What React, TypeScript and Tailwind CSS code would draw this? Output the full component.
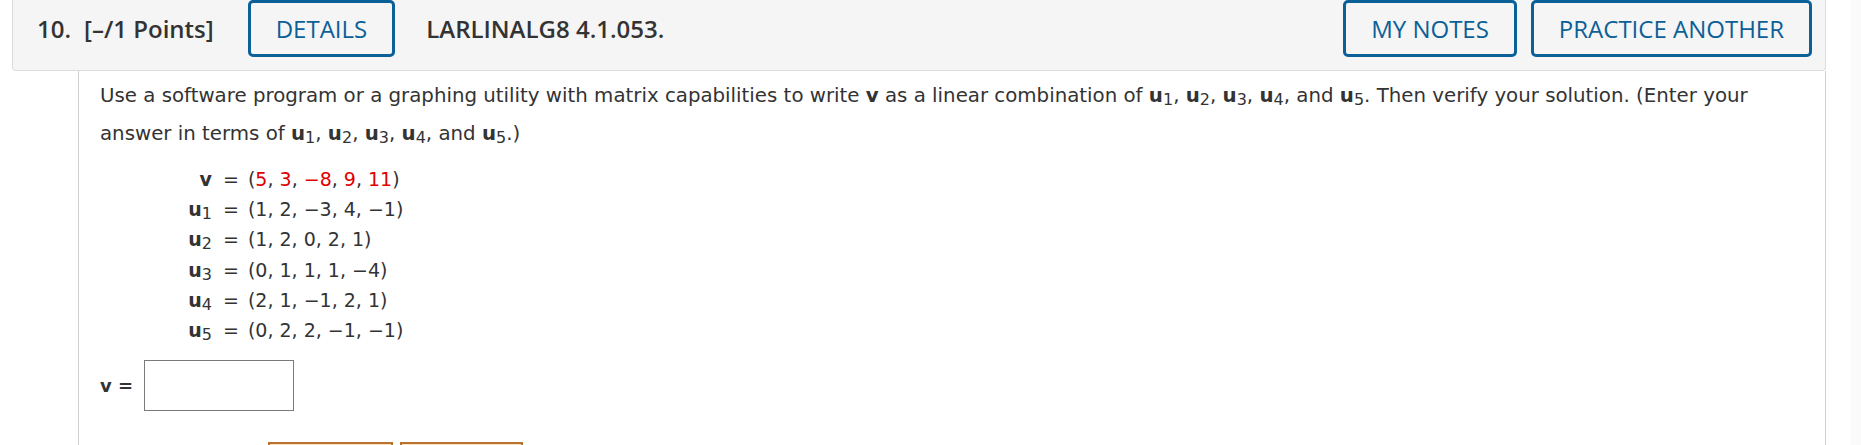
import type { ReactNode } from 'react'

const headerFont = { fontFamily: '"Open Sans", "Liberation Sans", sans-serif' }
const bodyFont = { fontFamily: '"DejaVu Sans", Verdana, sans-serif' }

function HeaderButton({ children }: { children: ReactNode }) {
  return (
    <button className="h-[57px] rounded-[5px] border-[3px] border-[#0b6097] bg-[#f5f5f5] px-[25px] text-[24px] leading-none text-[#0b6097]">
      {children}
    </button>
  )
}

function U({ n }: { n: number }) {
  return (
    <span className="whitespace-nowrap">
      <b>u</b>
      <sub className="relative -bottom-[3px] text-[16px] align-baseline">{n}</sub>
    </span>
  )
}

const rows: { label: ReactNode; value: ReactNode }[] = [
  {
    label: <b>v</b>,
    value: (
      <>
        (<span className="text-[#e00000]">5</span>, <span className="text-[#e00000]">3</span>,{' '}
        <span className="text-[#e00000]">−8</span>, <span className="text-[#e00000]">9</span>,{' '}
        <span className="text-[#e00000]">11</span>)
      </>
    ),
  },
  { label: <U n={1} />, value: '(1, 2, −3, 4, −1)' },
  { label: <U n={2} />, value: '(1, 2, 0, 2, 1)' },
  { label: <U n={3} />, value: '(0, 1, 1, 1, −4)' },
  { label: <U n={4} />, value: '(2, 1, −1, 2, 1)' },
  { label: <U n={5} />, value: '(0, 2, 2, −1, −1)' },
]

export default function App() {
  return (
    <div className="flex h-[445px] w-[1861px] overflow-hidden bg-white text-[#333]">
      <div className="flex w-[1851px] flex-col pl-[12px] pr-[25px]">
        {/* question header */}
        <div
          className="flex h-[71px] shrink-0 items-start rounded-b-[4px] border border-t-0 border-[#dcdcdc] bg-[#f5f5f5] pr-[13px]"
          style={headerFont}
        >
          <div className="flex h-[57px] flex-1 items-center">
            <span className="ml-[24px] text-[24px] font-semibold">10.</span>
            <span className="ml-[13px] text-[24px] font-semibold">[–/1 Points]</span>
            <div className="ml-[34px]">
              <HeaderButton>DETAILS</HeaderButton>
            </div>
            <span className="ml-[31px] text-[24px] font-semibold">LARLINALG8 4.1.053.</span>
          </div>
          <div className="flex gap-[14px]">
            <HeaderButton>MY NOTES</HeaderButton>
            <HeaderButton>PRACTICE ANOTHER</HeaderButton>
          </div>
        </div>

        {/* question body */}
        <div
          className="ml-[66px] flex-1 border-x border-[#d0d0d0] pl-[21px] pr-[60px] pt-[6px] text-[19.8px]"
          style={bodyFont}
        >
          <p className="leading-[38px]">
            Use a software program or a graphing utility with matrix capabilities to write <b>v</b> as a
            linear combination of <U n={1} />, <U n={2} />, <U n={3} />, <U n={4} />, and <U n={5} />. Then
            verify your solution. (Enter your answer in terms of <U n={1} />, <U n={2} />, <U n={3} />,{' '}
            <U n={4} />, and <U n={5} />
            .)
          </p>

          <div className="mt-[11px] grid grid-cols-[112px_auto_1fr] text-[19px] leading-[30.2px]">
            {rows.map((r, i) => (
              <div key={i} className="contents">
                <div className="text-right">{r.label}</div>
                <div className="pl-[11px] pr-[9px]">=</div>
                <div>{r.value}</div>
              </div>
            ))}
          </div>

          <div className="mt-[15px] flex items-center">
            <span className="text-[18px] font-bold">v =</span>
            <input
              type="text"
              className="ml-[11px] h-[51px] w-[150px] border border-[#7a7a7a] bg-white outline-none"
            />
          </div>

          <div className="ml-[168px] mt-[31px] flex gap-[7px]">
            <div className="h-[30px] w-[125px] border-2 border-[#b8722f] bg-gradient-to-b from-[#fde3c0] to-[#f6c88f]" />
            <div className="h-[30px] w-[123px] border-2 border-[#b8722f] bg-gradient-to-b from-[#fde3c0] to-[#f6c88f]" />
          </div>
        </div>
      </div>
      <div className="w-[10px] bg-[#fafafa]" />
    </div>
  )
}
